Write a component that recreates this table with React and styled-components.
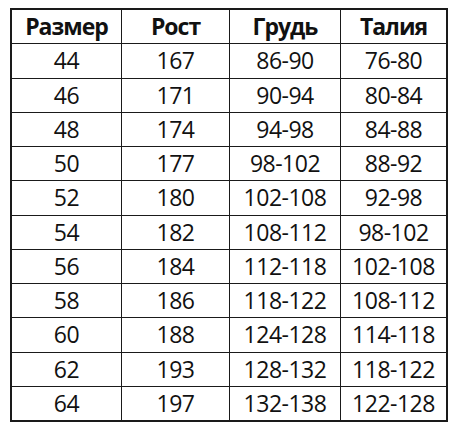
import React from 'react'
import styled, { createGlobalStyle } from 'styled-components'

const GlobalStyle = createGlobalStyle`
  html, body {
    margin: 0;
    padding: 0;
    background: #ffffff;
  }
`

const Page = styled.div`
  padding: 8px 0 0 10px;
  background: #ffffff;
  width: 455px;
  height: 436px;
  box-sizing: border-box;
`

const Grid = styled.div`
  display: grid;
  grid-template-columns: 109px 107px 110px 105px;
  grid-auto-rows: 33.25px;
  gap: 1px;
  width: max-content;
  background: #1a1a1a;
  border: 2px solid #1a1a1a;
`

const Cell = styled.div`
  display: flex;
  align-items: center;
  justify-content: center;
  background: #ffffff;
  color: #111111;
  font-family: "Open Sans", "Noto Sans", sans-serif;
  font-size: 23px;
  font-weight: ${p => (p.$head ? 700 : 400)};
  letter-spacing: ${p => (p.$head ? '-1px' : '-0.5px')};
  line-height: 1;
`

const headers = ['Размер', 'Рост', 'Грудь', 'Талия']

const rows = [
  ['44', '167', '86-90', '76-80'],
  ['46', '171', '90-94', '80-84'],
  ['48', '174', '94-98', '84-88'],
  ['50', '177', '98-102', '88-92'],
  ['52', '180', '102-108', '92-98'],
  ['54', '182', '108-112', '98-102'],
  ['56', '184', '112-118', '102-108'],
  ['58', '186', '118-122', '108-112'],
  ['60', '188', '124-128', '114-118'],
  ['62', '193', '128-132', '118-122'],
  ['64', '197', '132-138', '122-128'],
]

export default function App() {
  return (
    <>
      <GlobalStyle />
      <Page>
        <Grid>
          {headers.map(h => (
            <Cell key={h} $head>{h}</Cell>
          ))}
          {rows.map((r, i) =>
            r.map((v, j) => <Cell key={i + '-' + j}>{v}</Cell>)
          )}
        </Grid>
      </Page>
    </>
  )
}
